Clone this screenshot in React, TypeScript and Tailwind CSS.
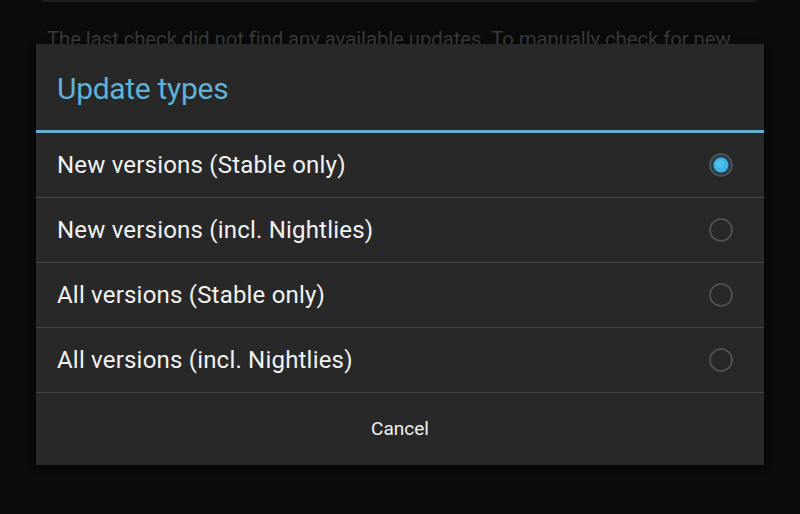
import React from "react";

const options = [
  { label: "New versions (Stable only)", checked: true },
  { label: "New versions (incl. Nightlies)", checked: false },
  { label: "All versions (Stable only)", checked: false },
  { label: "All versions (incl. Nightlies)", checked: false },
];

function Radio({ checked }: { checked: boolean }) {
  return (
    <svg width="26" height="26" viewBox="0 0 26 26">
      {checked ? (
        <>
          <circle cx="13" cy="13" r="11" fill="#2f3d44" stroke="#4b5a62" strokeWidth="1.5" />
          <circle cx="13" cy="13" r="7.5" fill="#3fb4e8" />
          <circle cx="12" cy="12" r="4" fill="#5cc6f2" opacity="0.6" />
        </>
      ) : (
        <circle cx="13" cy="13" r="11" fill="none" stroke="#555555" strokeWidth="1.6" />
      )}
    </svg>
  );
}

export default function App() {
  return (
    <div
      className="relative w-[800px] h-[514px] overflow-hidden bg-[#0a0b0d]"
      style={{ fontFamily: "Roboto, 'Noto Sans', sans-serif" }}
    >
      <div className="ml-[42px] w-[715px] h-[2px] bg-[#1d1e20]" />
      <div className="pl-[47px] pt-[23px] text-[20.4px] leading-[28px] text-[#38393b] whitespace-nowrap tracking-[-0.1px]">
        The last check did not find any available updates. To manually check for new
      </div>

      <div className="absolute left-[36px] top-[44px] w-[728px] h-[421px] bg-[#282828] shadow-[0_2px_6px_rgba(0,0,0,0.6)] flex flex-col">
        <div className="h-[86px] flex items-center pl-[21px] pt-[2px] text-[30px] text-[#5fb2d8] tracking-[-0.3px]">
          Update types
        </div>
        <div className="h-[3px] bg-[#67aecb]" />
        {options.map((o, i) => (
          <React.Fragment key={i}>
            <div className="h-[64px] flex items-center justify-between pl-[21px] pr-[30px]">
              <span className="text-[24px] tracking-[0.2px] text-[#f2f2f2]">{o.label}</span>
              <Radio checked={o.checked} />
            </div>
            <div className="h-[1px] bg-[#464646]" />
          </React.Fragment>
        ))}
        <div className="flex-1 flex items-center justify-center text-[19px] text-[#f0f0f0]">
          Cancel
        </div>
      </div>
    </div>
  );
}
